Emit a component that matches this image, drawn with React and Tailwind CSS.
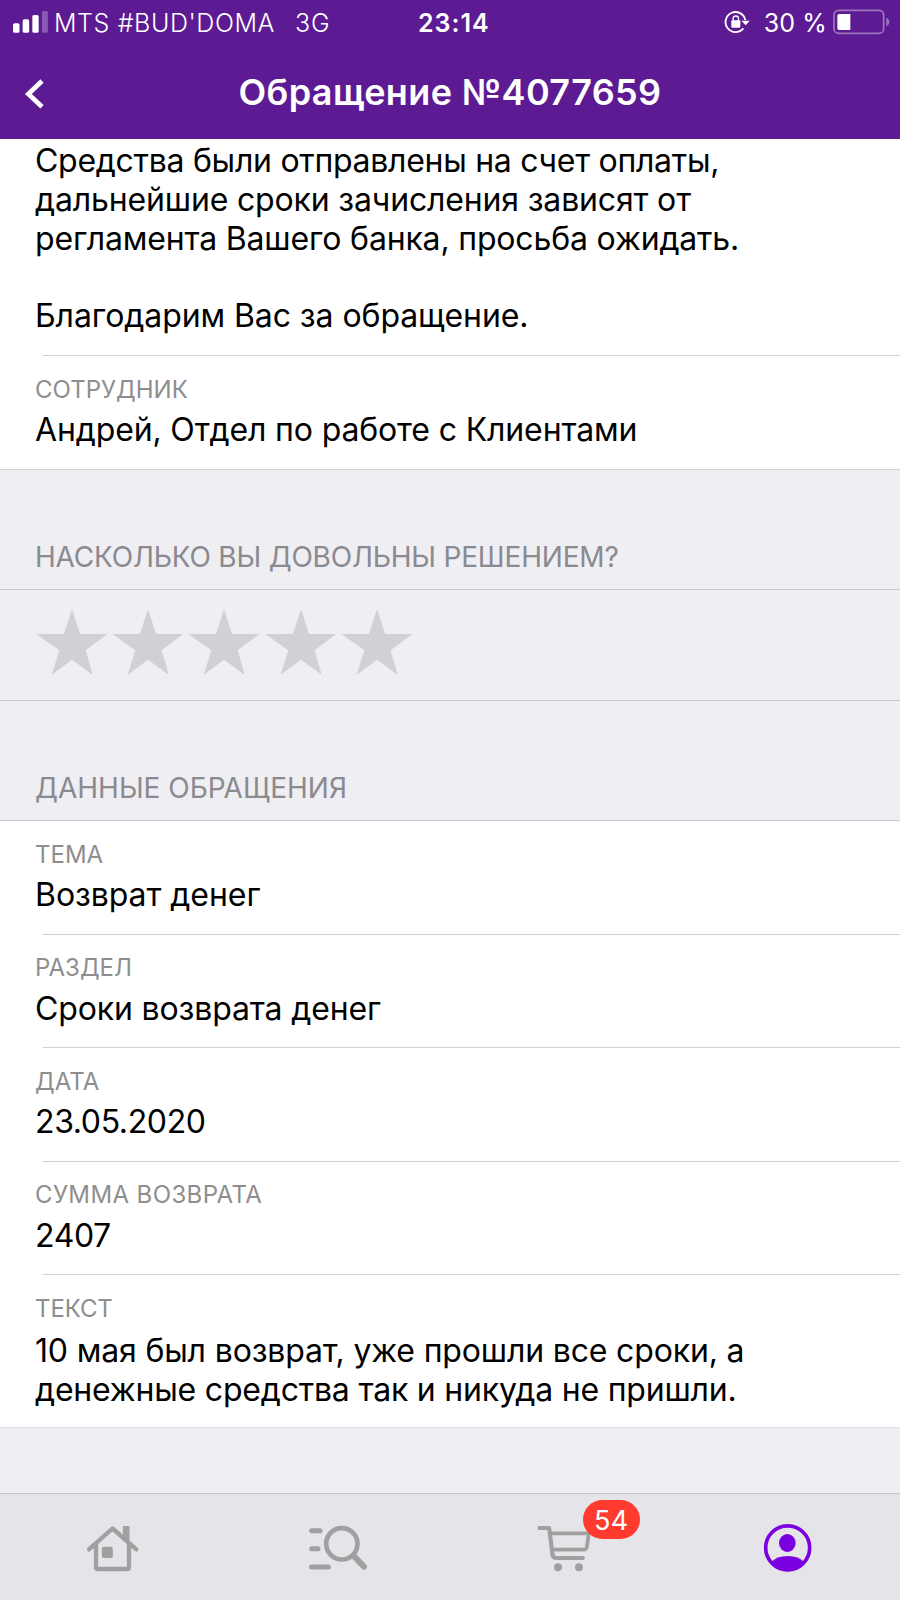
function SignalIcon() {
  return (
    <svg className="h-[22px] w-[35px]" viewBox="39 33 105 66" fill="#fff">
      <rect x="39" y="70" width="19.5" height="28.5" rx="5" />
      <rect x="68" y="58" width="19.5" height="40.5" rx="5" />
      <rect x="97" y="45" width="19" height="53.5" rx="5" />
      <rect x="126" y="33" width="17.5" height="65.5" rx="4" opacity="0.28" />
    </svg>
  );
}

function RotationLockIcon() {
  return (
    <svg className="h-[24px] w-[26px]" viewBox="823 30 78 72" fill="none">
      <path d="M887 60 A30 30 0 1 0 881 85" stroke="#fff" strokeWidth="5.5" />
      <path d="M875 62 H900 L888 76 Z" fill="#fff" />
      <rect x="845" y="61" width="27" height="22" rx="3" fill="#fff" />
      <path d="M850.5 62 V56 a8 8 0 0 1 16 0 V62" stroke="#fff" strokeWidth="4" />
    </svg>
  );
}

function BatteryIcon() {
  return (
    <svg className="h-[26px] w-[58px]" viewBox="1148 27 174 78" fill="none">
      <rect x="1151" y="31" width="149" height="69" rx="14" stroke="#fff" strokeOpacity="0.4" strokeWidth="5" />
      <path d="M1167 42 H1200 V90 H1167 Q1161 90 1161 84 V48 Q1161 42 1167 42 Z" fill="#fff" />
      <path d="M1308 53 Q1317 57 1317 66 Q1317 75 1308 79 Z" fill="#fff" fillOpacity="0.4" />
    </svg>
  );
}

function HomeIcon() {
  return (
    <svg className="h-[48px] w-[72px]" viewBox="51.5 132 216 144" fill="none" stroke="#a0a0a1" strokeWidth="13" strokeLinecap="round" strokeLinejoin="round">
      <path d="M87.5 208 L158 145.500 L229.500 208" />
      <path d="M108.5 194 V260 Q108.5 267 115 267 H201 Q207.5 267 207.5 260 V194" />
      <path d="M189 166 V141 Q189 138 192 138 H206 Q209 138 209 141 V186 Z" fill="#a0a0a1" stroke="none" />
      <rect x="126" y="200" width="33" height="34" rx="6" fill="#a0a0a1" stroke="none" />
    </svg>
  );
}

function SearchListIcon() {
  return (
    <svg className="h-[48px] w-[72px]" viewBox="727 132 216 144" fill="none" stroke="#a0a0a1" strokeLinecap="round">
      <circle cx="846.5" cy="191.5" r="47" strokeWidth="14" />
      <path d="M884 230 L913 260" strokeWidth="18" />
      <path d="M756 152.5 H781 M756 206.5 H775 M756 261 H806" strokeWidth="15" />
    </svg>
  );
}

function CartIcon() {
  return (
    <svg className="h-[48px] w-[72px]" viewBox="79.5 132 216 144" fill="none" stroke="#a0a0a1" strokeLinecap="round" strokeLinejoin="round">
      <path d="M117 144 H146 L156 224 Q157.5 234 168 234 H247" strokeWidth="12.5" />
      <path d="M150 160 H265 L259 201 Q257.5 209 249 209 H156" strokeWidth="11" />
      <circle cx="172.5" cy="262" r="12" fill="#a0a0a1" stroke="none" />
      <circle cx="235.5" cy="262" r="12" fill="#a0a0a1" stroke="none" />
    </svg>
  );
}

function ProfileIcon() {
  return (
    <svg className="h-[48px] w-[72px]" viewBox="756.5 132 216 144" fill="#7b00e0">
      <circle cx="863.5" cy="203.5" r="66" fill="none" stroke="#7b00e0" strokeWidth="11" />
      <ellipse cx="862.5" cy="189" rx="25" ry="27" />
      <path d="M815 246 Q830 228 863.5 228 Q897 228 912 246 Q893 274 863.5 274 Q834 274 815 246 Z" />
    </svg>
  );
}

function Star() {
  return (
    <svg className="h-[66px] w-[72px]" viewBox="109 267 216 198" fill="#d1d0d5">
      <path d="M217 267 L241 342 H323 L258 391 L279 464 L217 419 L156 464 L179 391 L110 342 H193 Z" />
    </svg>
  );
}

function Label({ children, className = "" }) {
  return <div className={`h-[30px] text-[24px] leading-[30px] text-[#8e8e8e] ${className}`}>{children}</div>;
}

function Field({ label, labelClass, children }) {
  return (
    <div className="flex h-[113.6px] flex-col">
      <div className="grow px-[35px] pt-[18.6px]">
        <Label className={labelClass}>{label}</Label>
        <div className="pt-[6.6px] text-[32px] leading-[38.8px] text-black">{children}</div>
      </div>
      <div className="ml-[43px] h-px bg-[#d1d1d4]" />
    </div>
  );
}

function SectionTitle({ children }) {
  return (
    <div className="flex h-[120px] items-end border-b border-[#c9c8cd] px-[35px] pb-[15px] text-[28px] leading-[34px] text-[#8a8a8f]">
      {children}
    </div>
  );
}

export default function App() {
  return (
    <div className="flex h-[1600px] w-[900px] flex-col overflow-hidden whitespace-nowrap bg-[#efeef3] font-['Inter',sans-serif]">
      <header className="h-[139px] shrink-0 bg-[#5c1b93] text-white">
        <div className="flex h-[46px] pt-2 text-[25px] leading-[30px]">
          <div className="flex w-[418px] pl-[13px]">
            <div className="pt-[3px]">
              <SignalIcon />
            </div>
            <span className="ml-[6px] font-[350] tracking-[0.6px]">MTS #BUD'DOMA</span>
            <span className="ml-[20px] font-[350] tracking-[0.8px]">3G</span>
          </div>
          <span className="font-semibold tracking-[1px]">23:14</span>
          <div className="flex grow justify-end pr-[9px]">
            <div className="mr-[14px] pt-[2px]">
              <RotationLockIcon />
            </div>
            <span className="tracking-[0.1px]">30 %</span>
            <div className="ml-[6px] pt-[1px]">
              <BatteryIcon />
            </div>
          </div>
        </div>
        <div className="grid h-[91px] grid-cols-[60px_1fr_60px] items-center">
          <svg className="ml-[24px] mt-[5px] h-[30px] w-[22px]" viewBox="72 239 66 90" fill="none">
            <path d="M126 245 L85 284 L126 322" stroke="#fff" strokeWidth="14" />
          </svg>
          <h1 className="text-center text-[36px] font-semibold leading-[44px] tracking-[0.35px]">Обращение №4077659</h1>
        </div>
      </header>

      <main className="h-[1354px] shrink-0">
        <section className="border-b border-[#d0d0d3] bg-white">
          <div className="h-[216px] px-[35px] pt-[3px] text-[32px] leading-[38.8px] text-black">
            <p className="tracking-[-0.28px]">Средства были отправлены на счет оплаты,</p>
            <p className="tracking-[-0.16px]">дальнейшие сроки зачисления зависят от</p>
            <p className="tracking-[-0.17px]">регламента Вашего банка, просьба ожидать.</p>
            <p>&nbsp;</p>
            <p className="tracking-[-0.08px]">Благодарим Вас за обращение.</p>
          </div>
          <div className="ml-[43px] h-px bg-[#d1d1d4]" />
          <div className="h-[113px] px-[35px] pt-[18.6px]">
            <Label>СОТРУДНИК</Label>
            <p className="pt-[6.6px] text-[32px] leading-[38.8px] tracking-[-0.14px] text-black">Андрей, Отдел по работе с Клиентами</p>
          </div>
        </section>

        <section>
          <SectionTitle>
            <span className="tracking-[-0.19px]">НАСКОЛЬКО ВЫ ДОВОЛЬНЫ РЕШЕНИЕМ?</span>
          </SectionTitle>
          <div className="flex h-[111px] gap-[4.1px] border-b border-[#c9c8cd] pl-[36.3px] pt-[19.3px]">
            <Star />
            <Star />
            <Star />
            <Star />
            <Star />
          </div>
        </section>

        <section>
          <SectionTitle>
            <span>ДАННЫЕ ОБРАЩЕНИЯ</span>
          </SectionTitle>
          <div className="bg-white">
            <Field label="ТЕМА">
              <span className="tracking-[-0.06px]">Возврат денег</span>
            </Field>
            <Field label="РАЗДЕЛ">
              <span className="tracking-[-0.14px]">Сроки возврата денег</span>
            </Field>
            <Field label="ДАТА">
              <span className="tracking-[-0.38px]">23.05.2020</span>
            </Field>
            <Field label="СУММА ВОЗВРАТА" labelClass="tracking-[0.38px]">
              <span className="tracking-[-0.38px]">2407</span>
            </Field>
            <div className="h-[152.4px] border-b border-[#e0e0e3] px-[35px] pt-[19px]">
              <Label className="tracking-[-0.1px]">ТЕКСТ</Label>
              <div className="pt-[7.4px] text-[32px] leading-[38.8px] text-black">
                <p className="tracking-[-0.16px]">10 мая был возврат, уже прошли все сроки, а</p>
                <p className="tracking-[-0.2px]">денежные средства так и никуда не пришли.</p>
              </div>
            </div>
          </div>
        </section>
      </main>

      <nav className="grid h-[107px] shrink-0 grid-cols-4 justify-items-center border-t border-[#c3c3c7] bg-[#e5e4e9] pt-[30px]">
        <HomeIcon />
        <SearchListIcon />
        <div className="relative h-[48px]">
          <CartIcon />
          <span className="absolute left-[56px] top-[-24px] flex h-[39px] w-[57.5px] items-center justify-center rounded-full bg-[#ff3b30] pt-[2px] text-[27px] leading-[37px] tracking-[0.3px] text-white">
            54
          </span>
        </div>
        <ProfileIcon />
      </nav>
    </div>
  );
}
